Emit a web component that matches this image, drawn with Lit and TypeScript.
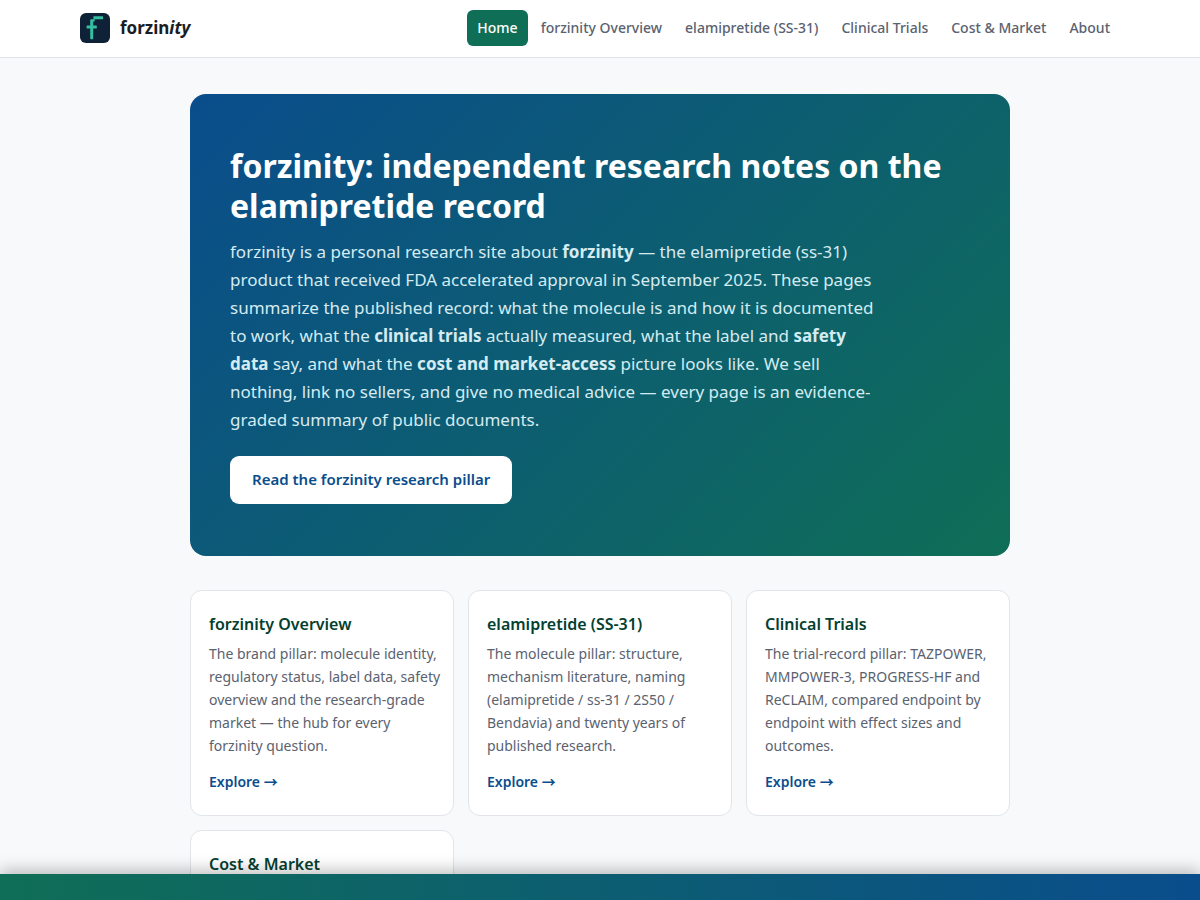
import { LitElement, html, css } from "lit";
import { customElement } from "lit/decorators.js";

const NAV = ["Home", "forzinity Overview", "elamipretide (SS-31)", "Clinical Trials", "Cost & Market", "About"];

const CARDS = [
  {
    title: "forzinity Overview",
    text: "The brand pillar: molecule identity, regulatory status, label data, safety overview and the research-grade market — the hub for every forzinity question.",
  },
  {
    title: "elamipretide (SS-31)",
    text: "The molecule pillar: structure, mechanism literature, naming (elamipretide / ss-31 / 2S50 / Bendavia) and twenty years of published research.",
  },
  {
    title: "Clinical Trials",
    text: "The trial-record pillar: TAZPOWER, MMPOWER-3, PROGRESS-HF and ReCLAIM, compared endpoint by endpoint with effect sizes and outcomes.",
  },
  {
    title: "Cost & Market",
    text: "",
  },
];

@customElement("app-root")
export class AppRoot extends LitElement {
  static styles = css`
    :host {
      display: block;
      height: 100vh;
      overflow: hidden;
      background: #f8f9fb;
      color: #1a1d23;
      font-family: "Noto Sans", "Noto Sans CJK SC", sans-serif;
    }
    * {
      box-sizing: border-box;
    }
    a {
      text-decoration: none;
    }
    .header {
      background: #fff;
      border-bottom: 1px solid #dfe4e8;
    }
    .bar {
      display: flex;
      align-items: center;
      justify-content: space-between;
      max-width: 1080px;
      margin: 0 auto;
      padding: 10px 20px 11px;
    }
    .brand {
      display: flex;
      align-items: center;
      gap: 10px;
      color: #1a1d23;
      font-size: 17px;
      line-height: 24px;
      font-weight: 700;
    }
    .logo {
      display: block;
      width: 30px;
      height: 30px;
    }
    .nav {
      display: flex;
      gap: 3px;
    }
    .link {
      padding: 7px 10px;
      border-radius: 6px;
      color: #5a6270;
      font-size: 14px;
      line-height: 22px;
      font-weight: 500;
    }
    .current {
      background: #0f6e56;
      color: #fff;
    }
    .main {
      max-width: 860px;
      margin: 0 auto;
      padding: 36px 20px;
    }
    .hero {
      padding: 52px 40px;
      border-radius: 16px;
      background: linear-gradient(135deg, #0a4d8c 0%, #0f6e56 100%);
    }
    .title {
      margin: 0 0 12px;
      color: #fff;
      font-size: 32px;
      line-height: 40px;
      font-weight: 700;
    }
    .lead {
      max-width: 650px;
      margin: 0 0 22px;
      color: #d4ebf2;
      font-size: 17px;
      line-height: 28px;
    }
    .cta {
      display: inline-block;
      padding: 11px 22px 13px;
      border-radius: 9px;
      background: #fff;
      color: #0a4d8c;
      font-size: 15px;
      line-height: 24px;
      font-weight: 600;
      vertical-align: top;
    }
    .cards {
      display: grid;
      grid-template-columns: repeat(auto-fill, minmax(230px, 1fr));
      gap: 14px;
      margin-top: 34px;
    }
    .card {
      padding: 22px 10px 22px 18px;
      border: 1px solid #e1e5ea;
      border-radius: 12px;
      background: #fff;
    }
    .card-title {
      margin: 0 0 7px;
      color: #04402f;
      font-size: 16px;
      line-height: 22px;
      font-weight: 600;
    }
    .card-text {
      margin: 0 0 13px;
      color: #5a6270;
      font-size: 14px;
      line-height: 23px;
    }
    .more {
      display: block;
      color: #0a4d8c;
      font-size: 14px;
      line-height: 23px;
      font-weight: 600;
    }
    .strip {
      position: fixed;
      right: 0;
      bottom: 0;
      left: 0;
      height: 26px;
      background: linear-gradient(90deg, #0f6e56, #0a4d8c);
      box-shadow: 0 -4px 16px rgba(0, 0, 0, 0.25);
    }
  `;

  render() {
    return html`
      <header class="header">
        <div class="bar">
          <a class="brand" href="#">
            <svg class="logo" viewBox="0 0 30 30" aria-hidden="true">
              <rect width="30" height="30" rx="6" fill="#0f2136" />
              <path
                d="M13.4 3.3H22.5a.6.6 0 0 1 .6.6V5.7a.6.6 0 0 1-.6.6H13.4zM10.2 7.2Q10.2 6.3 11.1 6.3H14.6V8.6H13.2V12.5H16.2a.6.6 0 0 1 .6.6V15a.6.6 0 0 1-.6.6H13.2V25.6a.6.6 0 0 1-.6.6H10.8a.6.6 0 0 1-.6-.6V15.6H7.2a.6.6 0 0 1-.6-.6V13.1a.6.6 0 0 1 .6-.6h3z"
                fill="#35bfa0"
              />
            </svg>
            <span>forzin<em>ity</em></span>
          </a>
          <nav class="nav">
            ${NAV.map((name, i) => html`<a class="link ${i === 0 ? "current" : ""}" href="#">${name}</a>`)}
          </nav>
        </div>
      </header>
      <main class="main">
        <section class="hero">
          <h1 class="title">forzinity: independent research notes on the elamipretide record</h1>
          <p class="lead">
            forzinity is a personal research site about <strong>forzinity</strong> — the elamipretide (ss-31) product
            that received FDA accelerated approval in September 2025. These pages summarize the published record: what
            the molecule is and how it is documented to work, what the <strong>clinical trials</strong> actually
            measured, what the label and <strong>safety data</strong> say, and what the
            <strong>cost and market-access</strong> picture looks like. We sell nothing, link no sellers, and give no
            medical advice — every page is an evidence-graded summary of public documents.
          </p>
          <a class="cta" href="#">Read the forzinity research pillar</a>
        </section>
        <section class="cards">
          ${CARDS.map(
            (card) => html`
              <article class="card">
                <h2 class="card-title">${card.title}</h2>
                <p class="card-text">${card.text}</p>
                <a class="more" href="#">Explore →</a>
              </article>
            `
          )}
        </section>
      </main>
      <div class="strip"></div>
    `;
  }
}
